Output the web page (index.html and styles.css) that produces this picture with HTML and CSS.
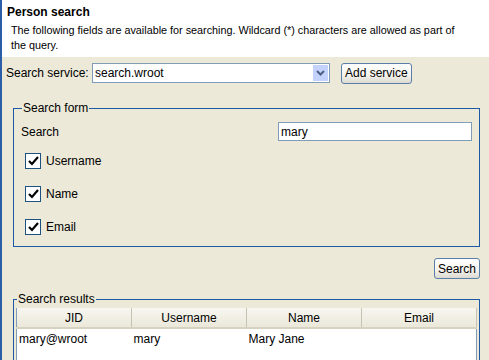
FILE: index.html
```html
<!DOCTYPE html>
<html lang="en">
<head>
    <meta charset="UTF-8" />
    <title>Person search</title>
    <link rel="stylesheet" href="styles.css">
</head>
<body>
<div class="page">
    <div class="intro">
        <div class="title">Person search</div>
        <p class="description">The following fields are available for searching. Wildcard (*) characters are allowed as part of the query.</p>
    </div>

    <div class="content">
        <div class="service-row">
            <span class="service-label">Search service:</span>
            <div class="combo">
                <span class="combo-value">search.wroot</span>
                <span class="combo-arrow">
                    <svg width="9" height="6" viewBox="0 0 9 6"><path d="M1 1 L4.5 4.5 L8 1" fill="none" stroke="#4d6185" stroke-width="2"/></svg>
                </span>
            </div>
            <button class="xp-btn">Add service</button>
        </div>

        <!-- Search form -->
        <fieldset class="group form-group">
            <legend>Search form</legend>
            <div class="search-row">
                <span>Search</span>
                <input type="text" class="search-input" value="mary">
            </div>
            <label class="check"><span class="box"><svg width="11" height="10" viewBox="0 0 11 10"><path d="M1 5 L4 8 L10 1" fill="none" stroke="#000" stroke-width="2.2"/></svg></span>Username</label>
            <label class="check"><span class="box"><svg width="11" height="10" viewBox="0 0 11 10"><path d="M1 5 L4 8 L10 1" fill="none" stroke="#000" stroke-width="2.2"/></svg></span>Name</label>
            <label class="check"><span class="box"><svg width="11" height="10" viewBox="0 0 11 10"><path d="M1 5 L4 8 L10 1" fill="none" stroke="#000" stroke-width="2.2"/></svg></span>Email</label>
        </fieldset>

        <div class="button-row">
            <button class="xp-btn">Search</button>
        </div>

        <!-- Search results -->
        <fieldset class="group results-group">
            <legend>Search results</legend>
            <table class="results">
                <thead>
                    <tr><th>JID</th><th>Username</th><th>Name</th><th>Email</th></tr>
                </thead>
                <tbody>
                    <tr><td>mary@wroot</td><td>mary</td><td>Mary Jane</td><td></td></tr>
                    <tr class="empty"><td></td><td></td><td></td><td></td></tr>
                </tbody>
            </table>
        </fieldset>
    </div>
</div>
</body>
</html>
```
FILE: styles.css
```css
html, body {
    margin: 0;
    height: 100%;
    overflow: hidden;
}

body {
    font-family: Tahoma, 'Liberation Sans', Arial, sans-serif;
    font-size: 11px;
    color: #000;
    background-color: #ece9d8;
}

.page {
    border-left: 2px solid #2c5ea8;
    height: 100%;
    box-sizing: border-box;
}

.intro {
    background-color: white;
    padding: 5px 0 0 5px;
    height: 57px;
    box-sizing: border-box;
}

.title {
    font-weight: bold;
    font-size: 12px;
}

.description {
    margin: 4px 0 0 4px;
    font-size: 10.8px;
    line-height: 15px;
    width: 452px;
}

.content {
    padding: 5px 9px 0 4px;
}

.service-row {
    display: flex;
    align-items: center;
    height: 22px;
}

.service-label {
    font-size: 12px;
    width: 86px;
}

.combo {
    display: flex;
    width: 238px;
    height: 20px;
    box-sizing: border-box;
    border: 1px solid #7f9db9;
    background-color: white;
}

.combo-value {
    flex: 1;
    font-size: 12px;
    padding: 2px 0 0 2px;
}

.combo-arrow {
    width: 15px;
    margin: 1px;
    background-color: #c3d3fd;
    display: flex;
    align-items: center;
    justify-content: center;
}

.xp-btn {
    font-family: inherit;
    font-size: 12px;
    padding: 0 3px;
    height: 21px;
    border: 1px solid #5a7ea8;
    border-radius: 3px;
    background: linear-gradient(#ffffff, #f3f2ec 60%, #dcdad0);
    color: #000;
}

.service-row .xp-btn {
    margin-left: 11px;
}

.group {
    margin: 17px 0 0 7px;
    border: 1px solid #1d5aa6;
    padding: 0 7px;
}

.group legend {
    font-size: 12px;
    padding: 0 1px;
    margin-left: 1px;
}

.form-group {
    height: 146px;
    box-sizing: border-box;
}

.search-row {
    display: flex;
    justify-content: space-between;
    align-items: center;
    font-size: 12px;
    margin-top: 7px;
    margin-bottom: 12px;
}

.search-input {
    width: 194px;
    height: 19px;
    box-sizing: border-box;
    border: 1px solid #7f9db9;
    font-family: inherit;
    font-size: 12px;
    padding: 0 2px;
}

.check {
    display: flex;
    align-items: center;
    font-size: 12px;
    margin: 0 0 17px 4px;
    height: 16px;
}

.box {
    width: 16px;
    height: 16px;
    box-sizing: border-box;
    border: 1px solid #1c5180;
    background-color: white;
    display: flex;
    align-items: center;
    justify-content: center;
    margin-right: 5px;
}

.button-row {
    display: flex;
    justify-content: flex-end;
    margin: 11px 0 0 0;
}

.button-row .xp-btn {
    padding: 0 3px;
}

.results-group {
    margin-top: 13px;
    padding: 2px 2px 0;
    height: 120px;
}

.results {
    width: 100%;
    border-collapse: collapse;
    background-color: white;
    border-left: 1px solid #7f9db9;
    border-right: 1px solid #7f9db9;
    font-size: 12px;
}

.results th {
    font-weight: normal;
    height: 19px;
    padding: 0;
    width: 25%;
    background: linear-gradient(#f7f6f0, #ebe8da);
    border-right: 1px solid #c7c3b2;
    border-bottom: 2px solid #d6d2c2;
}

.results td {
    padding: 3px 2px 0;
    height: 18px;
    vertical-align: top;
}

.results .empty td {
    height: 40px;
}
```
